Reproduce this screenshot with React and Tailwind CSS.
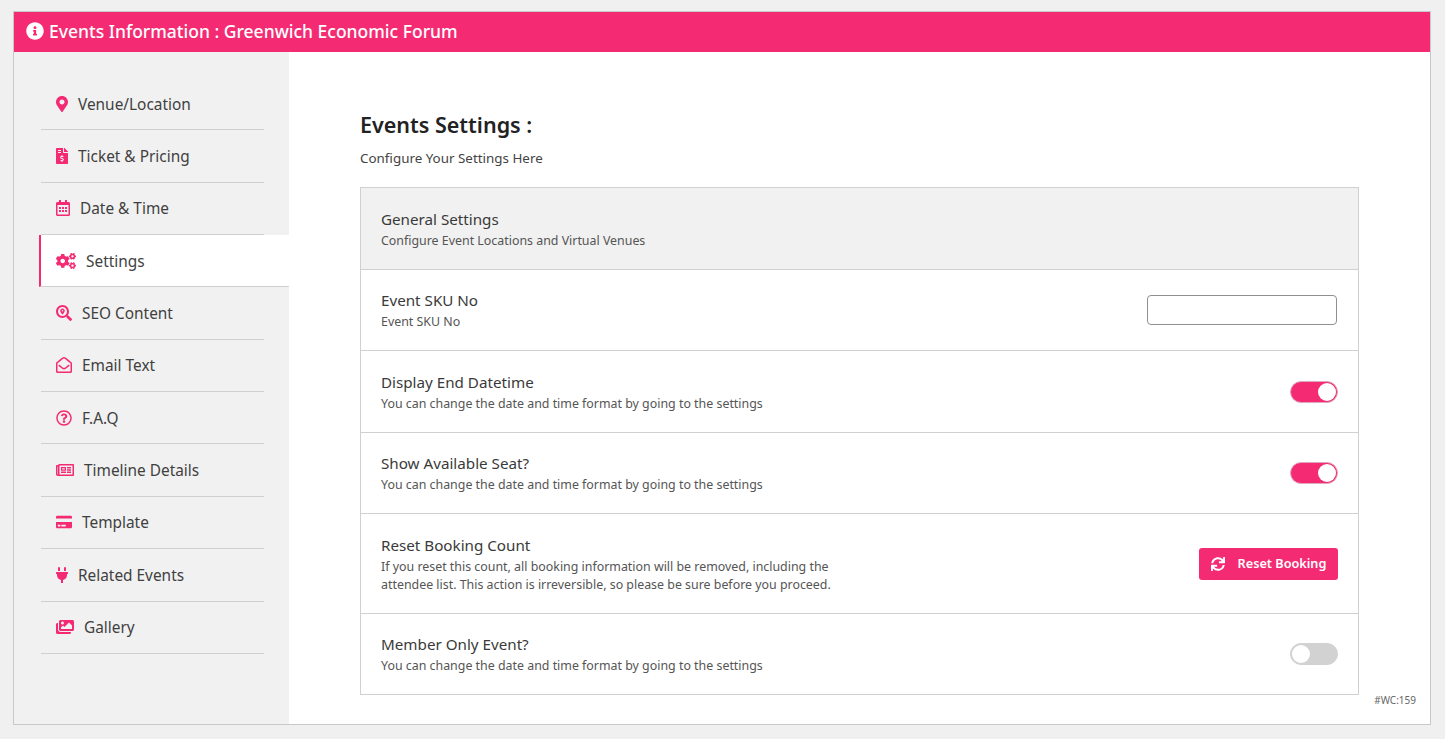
import {
  FaInfoCircle,
  FaMapMarkerAlt,
  FaFileInvoiceDollar,
  FaRegCalendarAlt,
  FaCogs,
  FaSearchLocation,
  FaRegEnvelopeOpen,
  FaRegQuestionCircle,
  FaRegNewspaper,
  FaCreditCard,
  FaPlug,
  FaImages,
  FaSync,
} from 'react-icons/fa';

const menu = [
  { label: 'Venue/Location', icon: FaMapMarkerAlt, size: 'text-[16px]', w: 'w-[12px]' },
  { label: 'Ticket & Pricing', icon: FaFileInvoiceDollar, size: 'text-[16px]', w: 'w-[12px]' },
  { label: 'Date & Time', icon: FaRegCalendarAlt, size: 'text-[16px]', w: 'w-[14px]' },
  { label: 'Settings', icon: FaCogs, size: 'text-[20px]', w: 'w-[20px]', active: true },
  { label: 'SEO Content', icon: FaSearchLocation, size: 'text-[16px]', w: 'w-[16px]' },
  { label: 'Email Text', icon: FaRegEnvelopeOpen, size: 'text-[16px]', w: 'w-[16px]' },
  { label: 'F.A.Q', icon: FaRegQuestionCircle, size: 'text-[16px]', w: 'w-[16px]' },
  { label: 'Timeline Details', icon: FaRegNewspaper, size: 'text-[18px]', w: 'w-[18px]' },
  { label: 'Template', icon: FaCreditCard, size: 'text-[16px]', w: 'w-[16px]' },
  { label: 'Related Events', icon: FaPlug, size: 'text-[16px]', w: 'w-[12px]' },
  { label: 'Gallery', icon: FaImages, size: 'text-[18px]', w: 'w-[18px]' },
];

function MenuItem({ item }) {
  const Icon = item.icon;
  if (item.active) {
    return (
      <div className="-ml-[2px] flex h-[52px] items-center border-b border-[#d0d0d0] border-l-2 border-l-[#f42b73] bg-white pl-[15px] text-[15.4px] text-[#3f3f3f]">
        <span className={`flex shrink-0 justify-center text-[#f42b73] ${item.size} ${item.w}`}>
          <Icon />
        </span>
        <span className="ml-[10px] pt-px">{item.label}</span>
      </div>
    );
  }
  return (
    <div className="mr-[25px] flex h-[52.4px] items-center border-b border-[#d0d0d0] pl-[15px] text-[15.4px] text-[#3f3f3f]">
      <span className={`flex shrink-0 justify-center text-[#f42b73] ${item.size} ${item.w}`}>
        <Icon />
      </span>
      <span className="ml-[10px] pt-px">{item.label}</span>
    </div>
  );
}

function Toggle({ on }) {
  return (
    <div
      className={`flex h-[22px] w-[48px] items-center rounded-full border px-[1px] ${
        on ? 'justify-end border-[#e0a8c0] bg-[#f42b73]' : 'justify-start border-[#d2d2d2] bg-[#d2d2d2]'
      }`}
    >
      <div className="size-[18px] rounded-full bg-white" />
    </div>
  );
}

function Row({ title, desc, height, children, shaded }) {
  return (
    <div className={`flex items-center justify-between border-b border-[#d0d0d0] px-5 ${height} ${shaded ? 'bg-[#f1f1f1]' : ''}`}>
      <div>
        <div className="text-[15.2px] leading-[22px] text-[#3a3a3a]">{title}</div>
        <div className="mt-[2px] text-[12.4px] leading-[18px] text-[#555]">{desc}</div>
      </div>
      {children}
    </div>
  );
}

export default function App() {
  return (
    <div className="min-h-[739px] bg-[#f0f0f0] pl-[13px] pr-[14px] pt-[11px] font-['Noto_Sans',sans-serif]">
      <div className="relative h-[714px] border border-[#c8c8c8] bg-white">
        <div className="flex h-[40px] items-center gap-[5px] bg-[#f42b73] pb-[2px] pl-3 text-[17.5px] font-medium text-white">
          <FaInfoCircle className="text-[18px]" />
          <span>Events Information : Greenwich Economic Forum</span>
        </div>
        <div className="flex h-[672px]">
          <div className="w-[275px] shrink-0 bg-[#f1f1f1] pl-[27px] pt-[26px]">
            {menu.map((item) => (
              <MenuItem key={item.label} item={item} />
            ))}
          </div>
          <div className="flex-1 pl-[71px] pr-[71px] pt-[58px]">
            <h1 className="text-[21.5px] font-semibold leading-[30px] text-[#222]">Events Settings :</h1>
            <p className="mt-[9px] text-[13.4px] leading-[18px] text-[#444]">Configure Your Settings Here</p>
            <div className="mt-[20px] border border-b-0 border-[#d0d0d0]">
              <Row title="General Settings" desc="Configure Event Locations and Virtual Venues" height="h-[82px]" shaded />
              <Row title="Event SKU No" desc="Event SKU No" height="h-[81px]">
                <input className="mr-px h-[30px] w-[190px] rounded border border-[#8f8f8f] bg-white" />
              </Row>
              <Row title="Display End Datetime" desc="You can change the date and time format by going to the settings" height="h-[82px]">
                <Toggle on />
              </Row>
              <Row title="Show Available Seat?" desc="You can change the date and time format by going to the settings" height="h-[81px]">
                <Toggle on />
              </Row>
              <Row
                title="Reset Booking Count"
                desc={
                  <>
                    If you reset this count, all booking information will be removed, including the
                    <br />
                    attendee list. This action is irreversible, so please be sure before you proceed.
                  </>
                }
                height="h-[100px]"
              >
                <button className="flex h-[32px] w-[139px] items-center justify-center gap-[13px] rounded-[3px] bg-[#f42b73] pt-px text-[12.7px] font-semibold text-white">
                  <FaSync className="text-[14px]" />
                  Reset Booking
                </button>
              </Row>
              <Row title="Member Only Event?" desc="You can change the date and time format by going to the settings" height="h-[81px]">
                <Toggle />
              </Row>
            </div>
          </div>
        </div>
        <div className="absolute bottom-[16px] right-[14px] text-[10px] text-[#666]">#WC:159</div>
      </div>
    </div>
  );
}
